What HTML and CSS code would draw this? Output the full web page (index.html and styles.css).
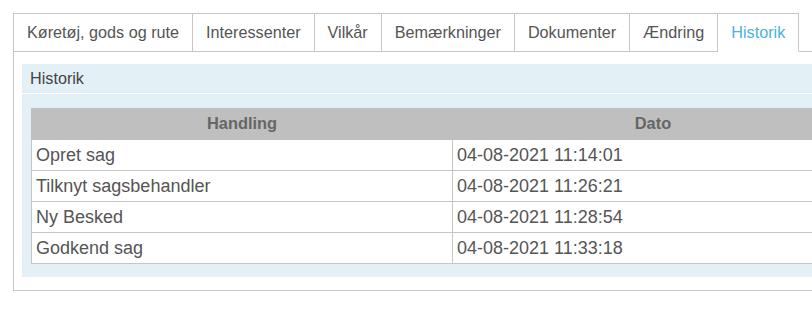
FILE: index.html
```html
<!DOCTYPE html>
<html lang="da">
<head>
  <meta charset="UTF-8">
  <title>Historik</title>
  <link rel="stylesheet" href="styles.css">
</head>
<body>
  <div class="page">
    <ul class="tabs">
      <li>Køretøj, gods og rute</li>
      <li>Interessenter</li>
      <li>Vilkår</li>
      <li>Bemærkninger</li>
      <li>Dokumenter</li>
      <li>Ændring</li>
      <li class="active">Historik</li>
      <li class="filler"></li>
    </ul>
    <div class="tab-panel">
      <div class="box">
        <div class="box-title">Historik</div>
        <div class="box-body">
          <table class="history">
            <thead>
              <tr>
                <th class="col-action">Handling</th>
                <th>Dato</th>
              </tr>
            </thead>
            <tbody>
              <tr><td>Opret sag</td><td>04-08-2021 11:14:01</td></tr>
              <tr><td>Tilknyt sagsbehandler</td><td>04-08-2021 11:26:21</td></tr>
              <tr><td>Ny Besked</td><td>04-08-2021 11:28:54</td></tr>
              <tr><td>Godkend sag</td><td>04-08-2021 11:33:18</td></tr>
            </tbody>
          </table>
        </div>
      </div>
    </div>
  </div>
</body>
</html>
```

FILE: styles.css
```css
html, body {
  margin: 0;
  overflow: hidden;
}
body {
  font-family: "Liberation Sans", Arial, sans-serif;
  font-size: 16px;
  color: #555;
  background-color: #fff;
}
.page {
  padding: 13px 0 0 13px;
  width: 840px;
}
.tabs {
  list-style: none;
  margin: 0;
  padding: 0;
  display: flex;
  font-size: 16.2px;
}
.tabs li {
  height: 37px;
  line-height: 37px;
  padding: 0 13px;
  border: 1px solid #c6c6c6;
  border-left: none;
  white-space: nowrap;
}
.tabs li:first-child {
  border-left: 1px solid #c6c6c6;
}
.tabs li.active {
  color: #4db1da;
  border-bottom-color: #fff;
}
.tabs li.filler {
  flex: 1;
  padding: 0;
  border-top: none;
  border-right: none;
  height: 38px;
}
.tab-panel {
  border: 1px solid #c6c6c6;
  border-top: none;
  padding: 12px 0 13px 8px;
}
.box {
  background-color: #e3f0f6;
  padding-bottom: 13px;
}
.box-title {
  height: 29px;
  line-height: 28px;
  padding: 0 8px;
  border-bottom: 1px solid #fff;
  font-size: 16.2px;
  color: #444;
}
.box-body {
  padding: 14px 0 0 9px;
}
.history {
  width: 823px;
  border-collapse: collapse;
  background-color: #fff;
}
.history th, .history td {
  border: 1px solid #c6c6c6;
  padding: 0 4px;
  height: 30px;
  text-align: left;
  font-size: 18px;
}
.history th {
  height: 31px;
  background-color: #bfbfbf;
  color: #666;
  font-size: 16.4px;
  font-weight: bold;
  text-align: center;
  border-top: none;
  border-color: #bfbfbf;
}
.history .col-action {
  width: 412px;
}
```
